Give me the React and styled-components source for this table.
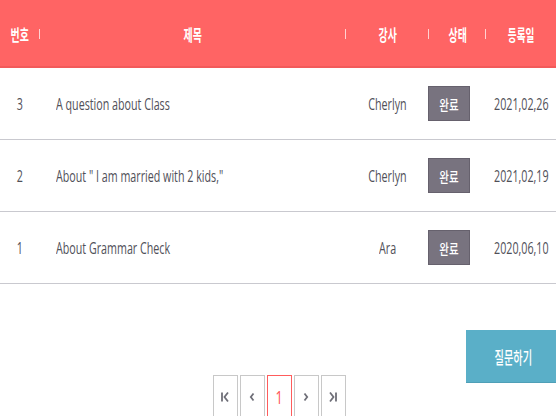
import React from "react";
import styled, { createGlobalStyle } from "styled-components";

const Global = createGlobalStyle`
  html, body { margin: 0; padding: 0; background: #fff; overflow: hidden; }
  body { font-family: "Open Sans", "Noto Sans CJK KR", sans-serif; }
`;

const Page = styled.div`
  width: 556px;
`;

const cols = "40px 306px 83px 57px 70px";

const HeaderRow = styled.div`
  display: grid;
  grid-template-columns: ${cols};
  height: 66px;
  background: #ff6464;
  border-bottom: 2px solid #f25a5a;
  align-items: center;
`;

const HeadCell = styled.div`
  position: relative;
  display: flex;
  justify-content: center;
  align-items: center;
  height: 100%;
  color: #fff;
  font-family: "Noto Sans CJK KR", sans-serif;
  font-size: 16px;
  font-weight: 700;
  padding-top: 2px;
  box-sizing: border-box;
  &::after {
    content: "";
    display: ${(p) => (p.$divider ? "block" : "none")};
    position: absolute;
    right: 0;
    top: 29px;
    width: 1px;
    height: 10px;
    background: rgba(255, 255, 255, 0.7);
  }
`;

const Squish = styled.span`
  display: inline-block;
  white-space: nowrap;
  transform: scaleX(${(p) => p.$s || 0.63});
  transform-origin: ${(p) => p.$origin || "center"};
`;

const Row = styled.div`
  display: grid;
  grid-template-columns: ${cols};
  height: 71px;
  border-bottom: 1px solid #c9c9cf;
  align-items: center;
  color: #505058;
  font-size: 17px;
`;

const Cell = styled.div`
  display: flex;
  justify-content: ${(p) => (p.$left ? "flex-start" : "center")};
  padding-left: ${(p) => (p.$left ? "16px" : "0")};
  align-items: center;
  overflow: visible;
`;

const Badge = styled.div`
  width: 42px;
  height: 35px;
  margin-left: -17px;
  box-sizing: border-box;
  background: #78737f;
  border: 1px solid #66616d;
  color: #fff;
  display: flex;
  justify-content: center;
  align-items: center;
  font-family: "Noto Sans CJK KR", sans-serif;
  font-size: 14px;
  font-weight: 500;
`;

const Footer = styled.div`
  display: grid;
  padding-top: 46px;
`;

const AskButton = styled.button`
  grid-area: 1 / 1;
  justify-self: end;
  margin-right: -4px;
  width: 94px;
  height: 53px;
  border: none;
  border-bottom: 1px solid #4f9fb7;
  background: #5aafc8;
  color: #fff;
  font-family: "Noto Sans CJK KR", sans-serif;
  font-size: 17px;
  font-weight: 500;
  display: flex;
  justify-content: center;
  align-items: center;
  padding: 0;
`;

const Pager = styled.div`
  grid-area: 1 / 1;
  justify-self: center;
  margin-top: 45px;
  margin-left: 2px;
  display: flex;
  gap: 2px;
`;

const PageBox = styled.div`
  width: 25px;
  height: 44px;
  box-sizing: border-box;
  border: 1px solid ${(p) => (p.$active ? "#ff5c5c" : "#c8c8c8")};
  display: flex;
  justify-content: center;
  align-items: center;
  color: ${(p) => (p.$active ? "#ff5050" : "#777")};
  font-size: 18px;
  padding-bottom: 1px;
`;

const Icon = ({ d }) => (
  <svg width="10" height="12" viewBox="0 0 10 12" fill="none" stroke="#6f6f78" strokeWidth="1.8">
    <path d={d} />
  </svg>
);

const rows = [
  { no: 3, title: "A question about Class", teacher: "Cherlyn", date: "2021,02,26" },
  { no: 2, title: 'About " I am married with 2 kids,"', teacher: "Cherlyn", date: "2021,02,19" },
  { no: 1, title: "About Grammar Check", teacher: "Ara", date: "2020,06,10" },
];

export default function App() {
  return (
    <Page>
      <Global />
      <HeaderRow>
        <HeadCell $divider><Squish $s={0.62}>번호</Squish></HeadCell>
        <HeadCell $divider><Squish $s={0.62}>제목</Squish></HeadCell>
        <HeadCell $divider><Squish $s={0.62}>강사</Squish></HeadCell>
        <HeadCell $divider><Squish $s={0.62}>상태</Squish></HeadCell>
        <HeadCell><Squish $s={0.6}>등록일</Squish></HeadCell>
      </HeaderRow>
      {rows.map((r) => (
        <Row key={r.no}>
          <Cell><Squish>{r.no}</Squish></Cell>
          <Cell $left><Squish $origin="left">{r.title}</Squish></Cell>
          <Cell><Squish>{r.teacher}</Squish></Cell>
          <Cell>
            <Badge><Squish $s={0.75}>완료</Squish></Badge>
          </Cell>
          <Cell><Squish>{r.date}</Squish></Cell>
        </Row>
      ))}
      <Footer>
        <AskButton><Squish $s={0.6}>질문하기</Squish></AskButton>
        <Pager>
          <PageBox><Icon d="M2 1.5 V10.5 M8 1.5 L4.5 6 L8 10.5" /></PageBox>
          <PageBox><Icon d="M6.5 2.5 L3.8 6 L6.5 9.5" /></PageBox>
          <PageBox $active><Squish $s={0.7}>1</Squish></PageBox>
          <PageBox><Icon d="M3.5 2.5 L6.2 6 L3.5 9.5" /></PageBox>
          <PageBox><Icon d="M8 1.5 V10.5 M2 1.5 L5.5 6 L2 10.5" /></PageBox>
        </Pager>
      </Footer>
    </Page>
  );
}
